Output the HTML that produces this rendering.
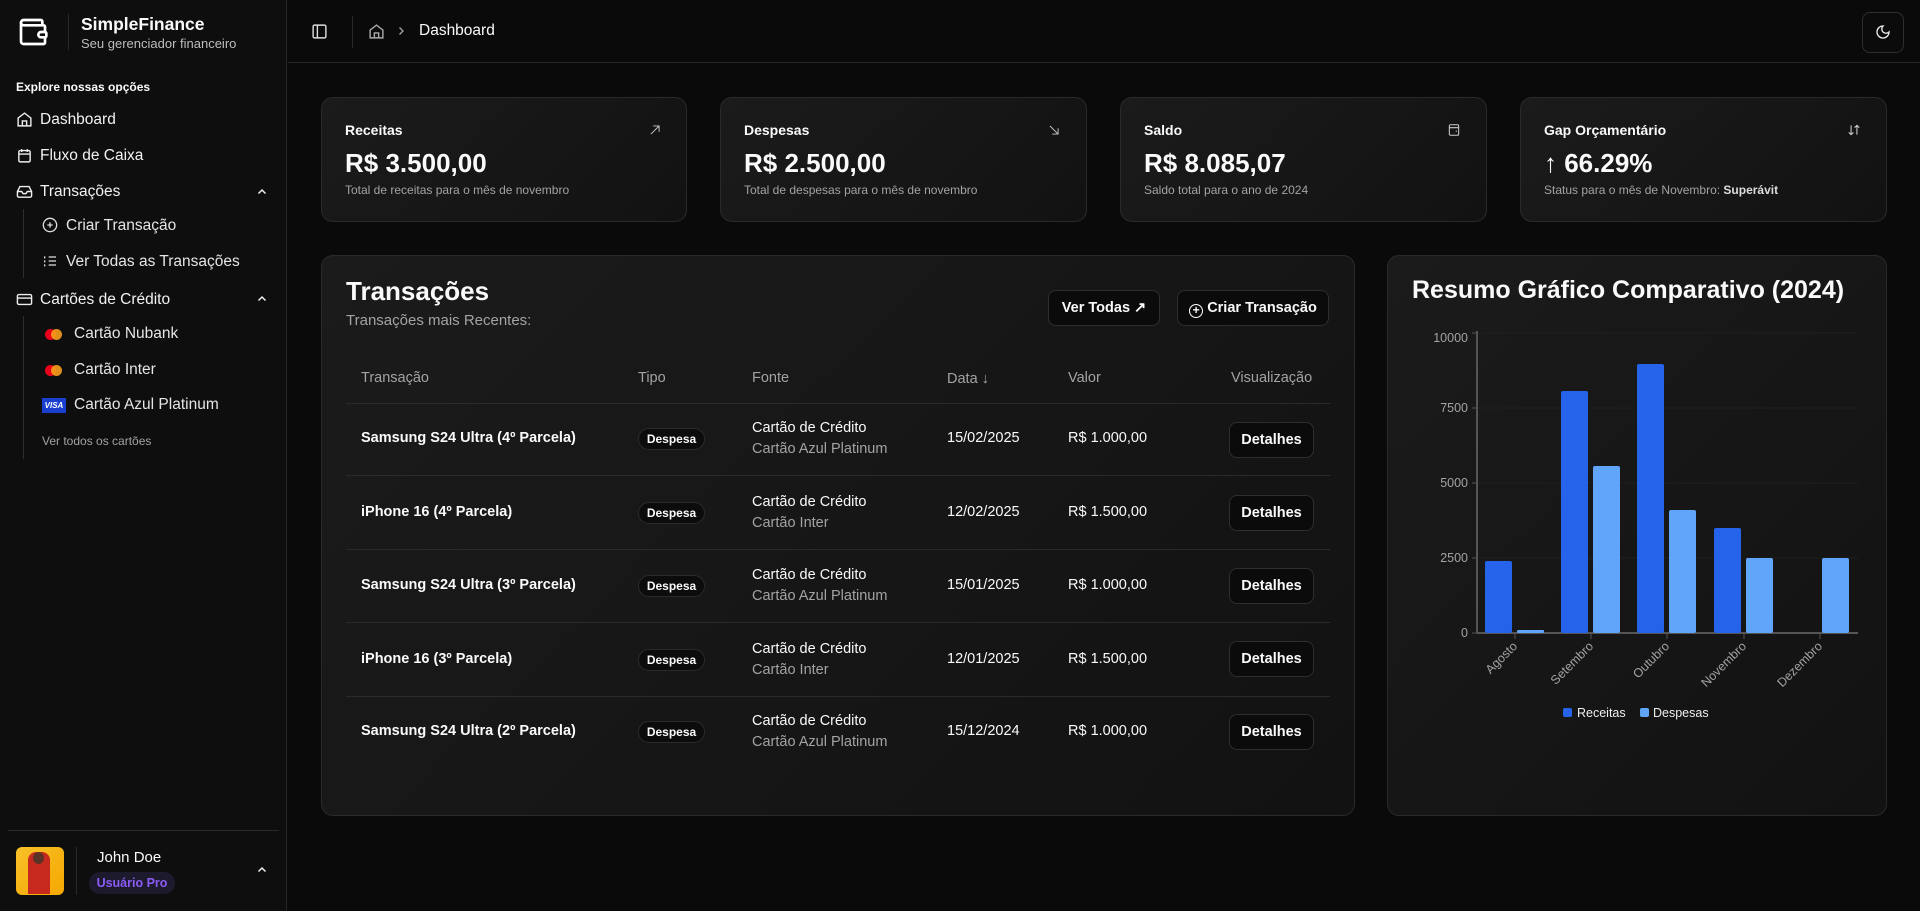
<!DOCTYPE html>
<html><head><meta charset="utf-8"><style>
*{box-sizing:border-box;margin:0;padding:0}
body{width:1920px;height:911px;background:#0a0a0a;color:#fafafa;font-family:"Liberation Sans",sans-serif;position:relative;overflow:hidden}
.a{position:absolute;white-space:nowrap}
svg{position:absolute}
.side{position:absolute;left:0;top:0;width:287px;height:911px;background:#0e0e0e;border-right:1px solid #262626}
.mi{position:absolute;font-size:15.5px;color:#f2f2f2;line-height:20px}
.card{position:absolute;border:1px solid #2a2a2a;border-radius:12px;background:linear-gradient(135deg,#1b1b1b,#121212)}
.lbl{font-size:14px;font-weight:bold}
.val{font-size:26px;font-weight:bold}
.cap{font-size:12px;color:#a3a3a3}
.th{font-size:14.5px;color:#a3a3a3}
.td{font-size:14.5px}
.tn{font-size:14.5px;font-weight:bold}
.badge{position:absolute;width:67px;height:22px;border:1px solid #2a2a2a;border-radius:11px;font-size:12px;font-weight:bold;text-align:center;line-height:20px;background:#0c0c0c}
.btn{position:absolute;border:1px solid #2e2e2e;border-radius:8px;background:#0b0b0b;font-size:14.5px;font-weight:bold;text-align:center}
.hl{position:absolute;left:346px;width:984px;height:1px;background:#2a2a2a}
</style></head><body>
<div class="side"></div>
<svg style="left:17px;top:16px" width="32" height="32" viewBox="0 0 24 24" fill="none" stroke="#fff" stroke-width="2" stroke-linecap="round" stroke-linejoin="round"><path d="M19 7V4a1 1 0 0 0-1-1H5a2 2 0 0 0 0 4h15a1 1 0 0 1 1 1v4h-3a2 2 0 0 0 0 4h3a1 1 0 0 0 1-1v-2a1 1 0 0 0-1-1"/><path d="M3 5v14a2 2 0 0 0 2 2h15a1 1 0 0 0 1-1v-4"/></svg>
<div class="a" style="left:68px;top:14px;width:1px;height:36px;background:#2a2a2a"></div>
<div class="a" style="left:81px;top:14px;font-size:17.5px;font-weight:bold">SimpleFinance</div>
<div class="a" style="left:81px;top:36px;font-size:13px;color:#bdbdbd">Seu gerenciador financeiro</div>
<div class="a" style="left:16px;top:80px;font-size:12px;font-weight:bold">Explore nossas opções</div>
<svg style="left:16px;top:111px" width="17" height="17" viewBox="0 0 24 24" fill="none" stroke="#eee" stroke-width="2"><path d="M3 10l9-7 9 7v11H3z"/><path d="M9 21v-7h6v7"/></svg>
<div class="mi" style="left:40px;top:110px">Dashboard</div>
<svg style="left:16px;top:147px" width="17" height="17" viewBox="0 0 24 24" fill="none" stroke="#eee" stroke-width="2"><rect x="4" y="5" width="16" height="16" rx="2"/><path d="M8 3v4M16 3v4M4 10h16"/></svg>
<div class="mi" style="left:40px;top:146px">Fluxo de Caixa</div>
<svg style="left:16px;top:183px" width="17" height="17" viewBox="0 0 24 24" fill="none" stroke="#eee" stroke-width="2"><path d="M22 12h-6l-2 3h-4l-2-3H2"/><path d="M5.5 5h13L22 12v6a2 2 0 0 1-2 2H4a2 2 0 0 1-2-2v-6z"/></svg>
<div class="mi" style="left:40px;top:182px">Transações</div>
<svg style="left:256px;top:186px" width="12" height="12" viewBox="0 0 24 24" fill="none" stroke="#eee" stroke-width="3"><path d="M5 15l7-7 7 7"/></svg>
<div class="a" style="left:23px;top:209px;width:1px;height:69px;background:#2e2e2e"></div>
<svg style="left:42px;top:217px" width="16" height="16" viewBox="0 0 24 24" fill="none" stroke="#ddd" stroke-width="2"><circle cx="12" cy="12" r="10"/><path d="M12 8v8M8 12h8"/></svg>
<div class="mi" style="left:66px;top:216px;color:#e5e5e5">Criar Transação</div>
<svg style="left:42px;top:253px" width="16" height="16" viewBox="0 0 24 24" fill="none" stroke="#ddd" stroke-width="2"><path d="M10 6h11M10 12h11M10 18h11M4 5v3M4 11v3M4 17v3"/></svg>
<div class="mi" style="left:66px;top:252px;color:#e5e5e5">Ver Todas as Transações</div>
<svg style="left:16px;top:291px" width="17" height="17" viewBox="0 0 24 24" fill="none" stroke="#eee" stroke-width="2"><rect x="2" y="5" width="20" height="14" rx="2"/><path d="M2 10h20"/></svg>
<div class="mi" style="left:40px;top:290px">Cartões de Crédito</div>
<svg style="left:256px;top:293px" width="12" height="12" viewBox="0 0 24 24" fill="none" stroke="#eee" stroke-width="3"><path d="M5 15l7-7 7 7"/></svg>
<div class="a" style="left:23px;top:316px;width:1px;height:143px;background:#2e2e2e"></div>
<div class="a" style="left:45px;top:329px;width:11px;height:11px;border-radius:50%;background:#eb001b"></div>
<div class="a" style="left:51px;top:329px;width:11px;height:11px;border-radius:50%;background:#f79e1b;opacity:.9"></div>
<div class="mi" style="left:74px;top:324px;color:#e5e5e5">Cartão Nubank</div>
<div class="a" style="left:45px;top:365px;width:11px;height:11px;border-radius:50%;background:#eb001b"></div>
<div class="a" style="left:51px;top:365px;width:11px;height:11px;border-radius:50%;background:#f79e1b;opacity:.9"></div>
<div class="mi" style="left:74px;top:360px;color:#e5e5e5">Cartão Inter</div>
<div class="a" style="left:42px;top:398px;width:24px;height:15px;background:#1a3fcf;color:#fff;font-size:8px;font-weight:bold;font-style:italic;text-align:center;line-height:15px">VISA</div>
<div class="mi" style="left:74px;top:395px;color:#e5e5e5">Cartão Azul Platinum</div>
<div class="a" style="left:42px;top:434px;font-size:12px;color:#a3a3a3">Ver todos os cartões</div>
<div class="a" style="left:8px;top:830px;width:271px;height:1px;background:#2a2a2a"></div>
<div class="a" style="left:16px;top:847px;width:48px;height:48px;border-radius:6px;background:linear-gradient(135deg,#f8c12a,#f5a800)"></div>
<div class="a" style="left:28px;top:852px;width:22px;height:42px;border-radius:8px 8px 0 0;background:#c8291f"></div>
<div class="a" style="left:33px;top:852px;width:11px;height:12px;border-radius:50%;background:#5a3326"></div>
<div class="a" style="left:76px;top:847px;width:1px;height:48px;background:#2a2a2a"></div>
<div class="a" style="left:97px;top:849px;font-size:15px">John Doe</div>
<div class="a" style="left:89px;top:872px;width:86px;height:22px;border-radius:11px;background:#1e1a2e;color:#8b5cf6;font-size:12.5px;font-weight:bold;text-align:center;line-height:22px">Usuário Pro</div>
<svg style="left:256px;top:864px" width="12" height="12" viewBox="0 0 24 24" fill="none" stroke="#eee" stroke-width="3"><path d="M5 15l7-7 7 7"/></svg>
<div class="a" style="left:288px;top:62px;width:1632px;height:1px;background:#262626"></div>
<svg style="left:311px;top:23px" width="17" height="17" viewBox="0 0 24 24" fill="none" stroke="#ddd" stroke-width="2"><rect x="3" y="3" width="18" height="18" rx="2"/><path d="M9 3v18"/></svg>
<div class="a" style="left:352px;top:16px;width:1px;height:32px;background:#2a2a2a"></div>
<svg style="left:368px;top:23px" width="17" height="17" viewBox="0 0 24 24" fill="none" stroke="#aaa" stroke-width="2"><path d="M3 10l9-7 9 7v11H3z"/><path d="M9 21v-7h6v7"/></svg>
<svg style="left:395px;top:25px" width="12" height="12" viewBox="0 0 24 24" fill="none" stroke="#aaa" stroke-width="2.5"><path d="M9 5l7 7-7 7"/></svg>
<div class="a" style="left:419px;top:22px;font-size:15.5px">Dashboard</div>
<div class="a" style="left:1862px;top:12px;width:42px;height:41px;border:1px solid #2e2e2e;border-radius:8px;background:#0b0b0b"></div>
<svg style="left:1875px;top:24px" width="16" height="16" viewBox="0 0 24 24" fill="none" stroke="#eee" stroke-width="2"><path d="M12 3a6 6 0 0 0 9 9 9 9 0 1 1-9-9z"/></svg>
<div class="card" style="left:321px;top:97px;width:366px;height:125px"></div>
<div class="card" style="left:720px;top:97px;width:367px;height:125px"></div>
<div class="card" style="left:1120px;top:97px;width:367px;height:125px"></div>
<div class="card" style="left:1520px;top:97px;width:367px;height:125px"></div>
<div class="a lbl" style="left:345px;top:122px">Receitas</div>
<div class="a val" style="left:345px;top:148px">R$ 3.500,00</div>
<div class="a cap" style="left:345px;top:183px">Total de receitas para o mês de novembro</div>
<svg style="left:648px;top:123px" width="14" height="14" viewBox="0 0 24 24" fill="none" stroke="#ccc" stroke-width="1.6"><path d="M5 19L19 5M9 5h10v10"/></svg>
<div class="a lbl" style="left:744px;top:122px">Despesas</div>
<div class="a val" style="left:744px;top:148px">R$ 2.500,00</div>
<div class="a cap" style="left:744px;top:183px">Total de despesas para o mês de novembro</div>
<svg style="left:1047px;top:123px" width="14" height="14" viewBox="0 0 24 24" fill="none" stroke="#ccc" stroke-width="1.6"><path d="M5 5l14 14M19 9v10H9"/></svg>
<div class="a lbl" style="left:1144px;top:122px">Saldo</div>
<div class="a val" style="left:1144px;top:148px">R$ 8.085,07</div>
<div class="a cap" style="left:1144px;top:183px">Saldo total para o ano de 2024</div>
<svg style="left:1447px;top:123px" width="14" height="14" viewBox="0 0 24 24" fill="none" stroke="#ccc" stroke-width="1.8"><rect x="4" y="3" width="16" height="18" rx="2"/><path d="M4 8h16M15 14h2"/></svg>
<div class="a lbl" style="left:1544px;top:122px">Gap Orçamentário</div>
<div class="a val" style="left:1544px;top:148px">↑ 66.29%</div>
<div class="a cap" style="left:1544px;top:183px">Status para o mês de Novembro: <b style="color:#ddd">Superávit</b></div>
<svg style="left:1847px;top:123px" width="14" height="14" viewBox="0 0 24 24" fill="none" stroke="#ccc" stroke-width="1.8"><path d="M7 4v16M3 16l4 4 4-4M17 20V4M13 8l4-4 4 4"/></svg>
<div class="card" style="left:321px;top:255px;width:1034px;height:561px"></div>
<div class="a" style="left:346px;top:276px;font-size:26px;font-weight:bold">Transações</div>
<div class="a" style="left:346px;top:312px;font-size:15px;color:#a3a3a3">Transações mais Recentes:</div>
<div class="btn" style="left:1048px;top:290px;width:112px;height:36px;line-height:34px">Ver Todas ↗</div>
<div class="btn" style="left:1177px;top:290px;width:152px;height:36px;line-height:34px"><span style="display:inline-block;width:14px;height:14px;border:1.6px solid #fff;border-radius:50%;font-size:12px;line-height:11px;vertical-align:-2px;margin-right:4px">+</span>Criar Transação</div>
<div class="a th" style="left:361px;top:370px">Transação</div>
<div class="a th" style="left:638px;top:370px">Tipo</div>
<div class="a th" style="left:752px;top:370px">Fonte</div>
<div class="a th" style="left:947px;top:371px">Data ↓</div>
<div class="a th" style="left:1068px;top:370px">Valor</div>
<div class="a th" style="left:1231px;top:370px">Visualização</div>
<div class="hl" style="top:403px"></div>
<div class="hl" style="top:475px"></div>
<div class="hl" style="top:549px"></div>
<div class="hl" style="top:622px"></div>
<div class="hl" style="top:696px"></div>

<div class="a tn" style="left:361px;top:430px">Samsung S24 Ultra (4º Parcela)</div>
<div class="badge" style="left:638px;top:428px">Despesa</div>
<div class="a td" style="left:752px;top:420px">Cartão de Crédito</div>
<div class="a td" style="left:752px;top:441px;color:#a3a3a3">Cartão Azul Platinum</div>
<div class="a td" style="left:947px;top:430px">15/02/2025</div>
<div class="a td" style="left:1068px;top:430px">R$ 1.000,00</div>
<div class="btn" style="left:1229px;top:422px;width:85px;height:36px;line-height:34px">Detalhes</div>

<div class="a tn" style="left:361px;top:504px">iPhone 16 (4º Parcela)</div>
<div class="badge" style="left:638px;top:502px">Despesa</div>
<div class="a td" style="left:752px;top:494px">Cartão de Crédito</div>
<div class="a td" style="left:752px;top:515px;color:#a3a3a3">Cartão Inter</div>
<div class="a td" style="left:947px;top:504px">12/02/2025</div>
<div class="a td" style="left:1068px;top:504px">R$ 1.500,00</div>
<div class="btn" style="left:1229px;top:495px;width:85px;height:36px;line-height:34px">Detalhes</div>

<div class="a tn" style="left:361px;top:577px">Samsung S24 Ultra (3º Parcela)</div>
<div class="badge" style="left:638px;top:575px">Despesa</div>
<div class="a td" style="left:752px;top:567px">Cartão de Crédito</div>
<div class="a td" style="left:752px;top:588px;color:#a3a3a3">Cartão Azul Platinum</div>
<div class="a td" style="left:947px;top:577px">15/01/2025</div>
<div class="a td" style="left:1068px;top:577px">R$ 1.000,00</div>
<div class="btn" style="left:1229px;top:568px;width:85px;height:36px;line-height:34px">Detalhes</div>

<div class="a tn" style="left:361px;top:651px">iPhone 16 (3º Parcela)</div>
<div class="badge" style="left:638px;top:649px">Despesa</div>
<div class="a td" style="left:752px;top:641px">Cartão de Crédito</div>
<div class="a td" style="left:752px;top:662px;color:#a3a3a3">Cartão Inter</div>
<div class="a td" style="left:947px;top:651px">12/01/2025</div>
<div class="a td" style="left:1068px;top:651px">R$ 1.500,00</div>
<div class="btn" style="left:1229px;top:641px;width:85px;height:36px;line-height:34px">Detalhes</div>

<div class="a tn" style="left:361px;top:723px">Samsung S24 Ultra (2º Parcela)</div>
<div class="badge" style="left:638px;top:721px">Despesa</div>
<div class="a td" style="left:752px;top:713px">Cartão de Crédito</div>
<div class="a td" style="left:752px;top:734px;color:#a3a3a3">Cartão Azul Platinum</div>
<div class="a td" style="left:947px;top:723px">15/12/2024</div>
<div class="a td" style="left:1068px;top:723px">R$ 1.000,00</div>
<div class="btn" style="left:1229px;top:714px;width:85px;height:36px;line-height:34px">Detalhes</div>

<div class="card" style="left:1387px;top:255px;width:500px;height:561px"></div>
<div class="a" style="left:1412px;top:276px;font-size:25px;font-weight:bold">Resumo Gráfico Comparativo (2024)</div>
<svg style="left:0;top:0" width="1920" height="911" font-family="Liberation Sans, sans-serif">
<g stroke="#1f1f1f"><line x1="1477" y1="333" x2="1858" y2="333"/><line x1="1477" y1="408" x2="1858" y2="408"/><line x1="1477" y1="483" x2="1858" y2="483"/><line x1="1477" y1="558" x2="1858" y2="558"/></g>
<g stroke="#555" stroke-width="2"><line x1="1477" y1="331" x2="1477" y2="633"/><line x1="1477" y1="633" x2="1858" y2="633"/></g>
<g stroke="#555"><line x1="1472" y1="333" x2="1477" y2="333"/><line x1="1472" y1="408" x2="1477" y2="408"/><line x1="1472" y1="483" x2="1477" y2="483"/><line x1="1472" y1="558" x2="1477" y2="558"/><line x1="1472" y1="633" x2="1477" y2="633"/>
<line x1="1515" y1="633" x2="1515" y2="639"/><line x1="1591" y1="633" x2="1591" y2="639"/><line x1="1667" y1="633" x2="1667" y2="639"/><line x1="1744" y1="633" x2="1744" y2="639"/><line x1="1820" y1="633" x2="1820" y2="639"/></g>
<g fill="#a3a3a3" font-size="12.5" text-anchor="end"><text x="1468" y="342">10000</text><text x="1468" y="412">7500</text><text x="1468" y="487">5000</text><text x="1468" y="562">2500</text><text x="1468" y="637">0</text></g>
<g fill="#2563eb"><rect x="1485" y="561" width="27" height="72" rx="2"/><rect x="1561" y="391" width="27" height="242" rx="2"/><rect x="1637" y="364" width="27" height="269" rx="2"/><rect x="1714" y="528" width="27" height="105" rx="2"/></g>
<g fill="#60a5fa"><rect x="1517" y="630" width="27" height="3" rx="1"/><rect x="1593" y="466" width="27" height="167" rx="2"/><rect x="1669" y="510" width="27" height="123" rx="2"/><rect x="1746" y="558" width="27" height="75" rx="2"/><rect x="1822" y="558" width="27" height="75" rx="2"/></g>
<g fill="#a3a3a3" font-size="12.5" text-anchor="end"><text transform="translate(1518,647) rotate(-45)">Agosto</text><text transform="translate(1594,647) rotate(-45)">Setembro</text><text transform="translate(1670,647) rotate(-45)">Outubro</text><text transform="translate(1747,647) rotate(-45)">Novembro</text><text transform="translate(1823,647) rotate(-45)">Dezembro</text></g>
<rect x="1563" y="708" width="9" height="9" rx="2" fill="#2563eb"/><text x="1577" y="717" fill="#eee" font-size="12.5">Receitas</text>
<rect x="1640" y="708" width="9" height="9" rx="2" fill="#60a5fa"/><text x="1653" y="717" fill="#eee" font-size="12.5">Despesas</text>
</svg>
</body></html>
